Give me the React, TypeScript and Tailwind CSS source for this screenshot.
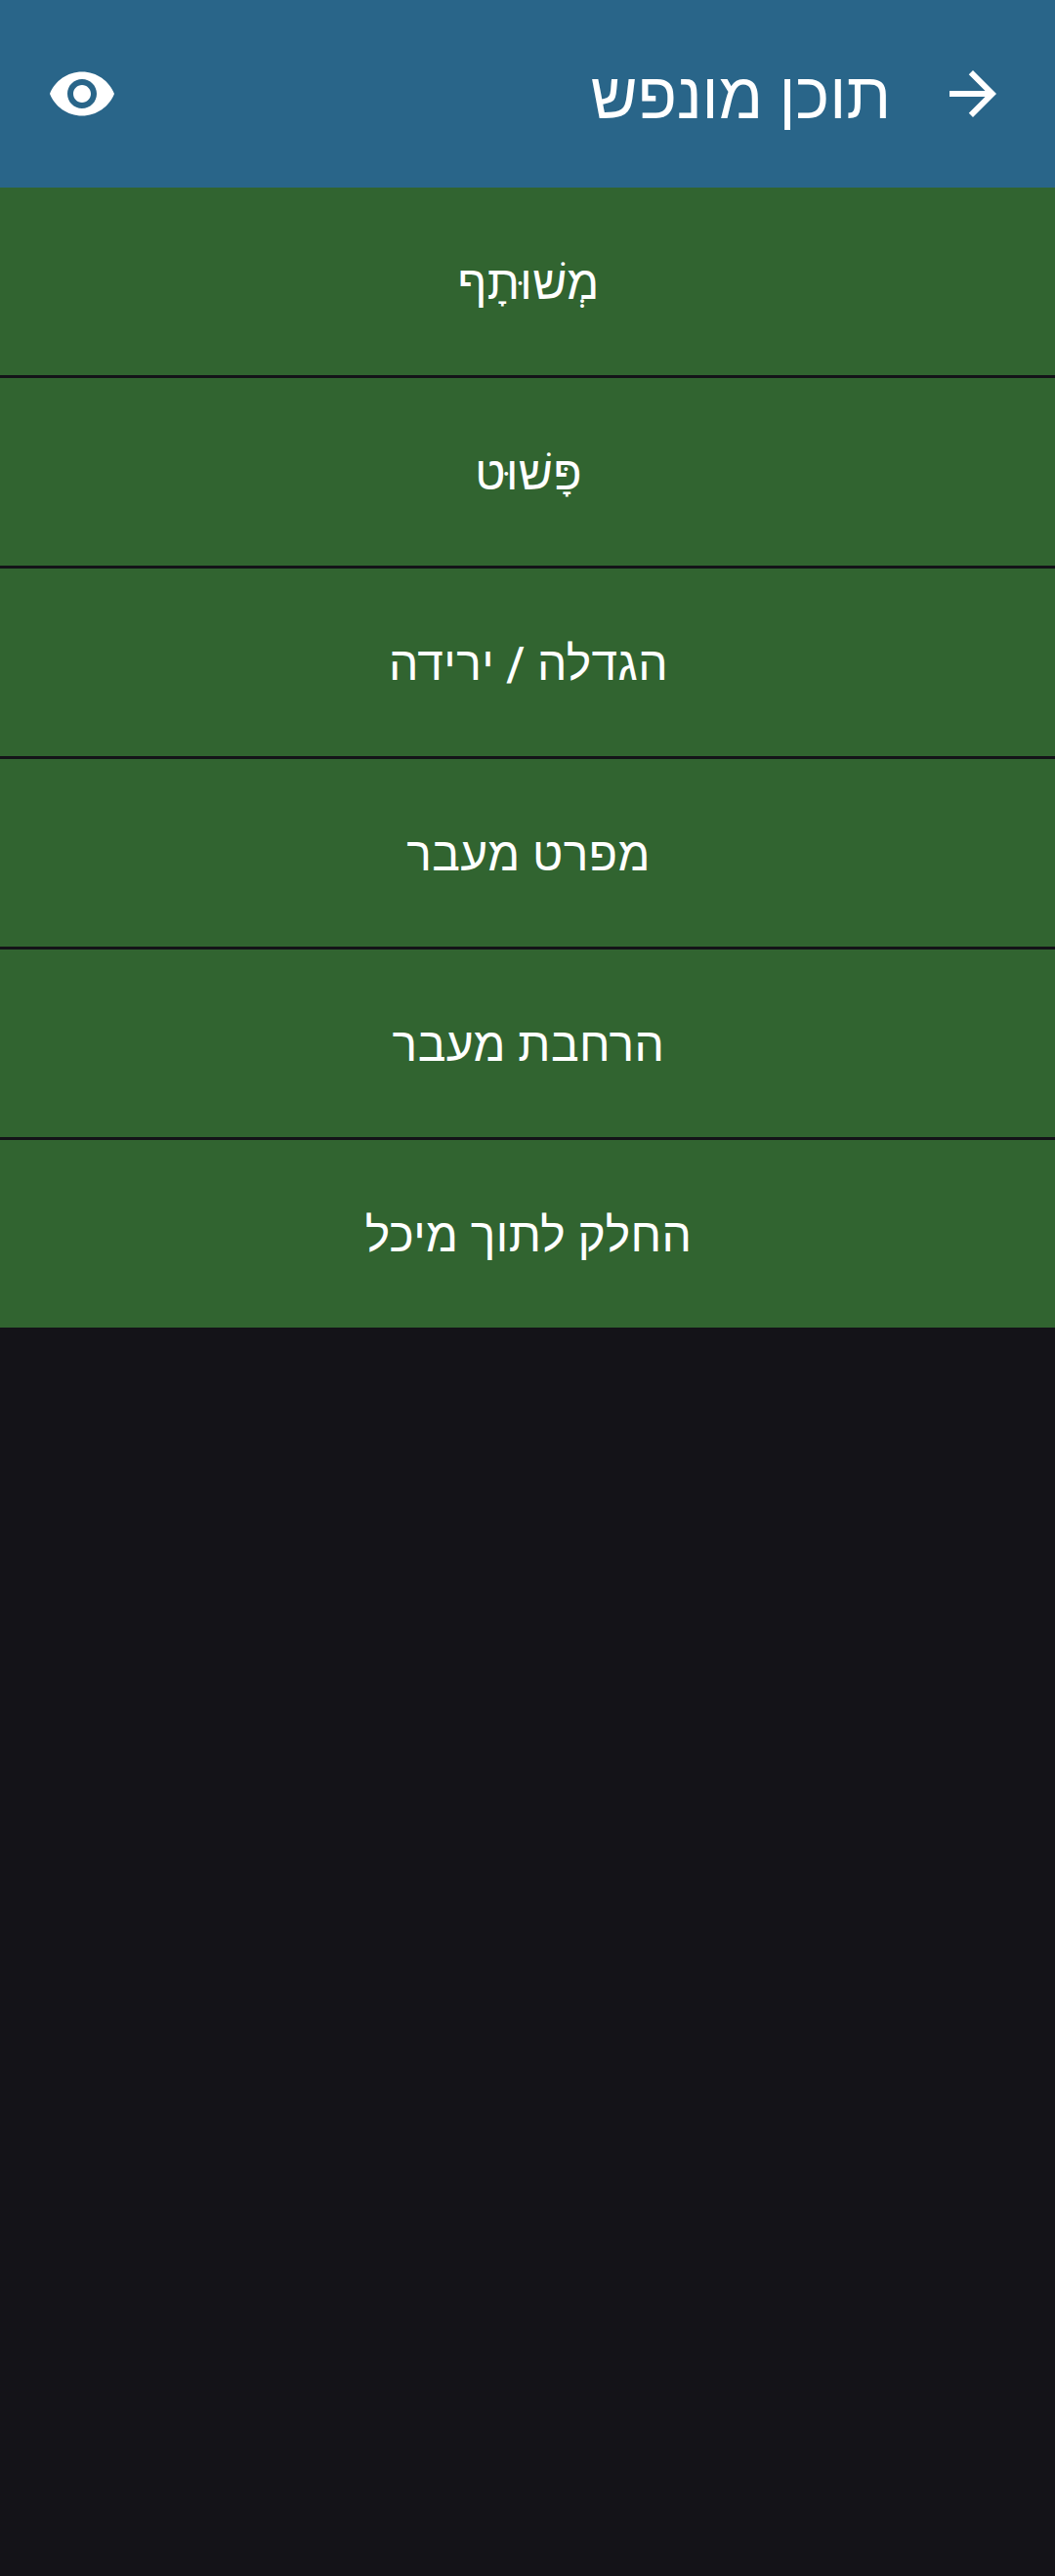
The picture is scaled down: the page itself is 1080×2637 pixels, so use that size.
const items = ["מְשׁוּתָף", "פָּשׁוּט", "הגדלה / ירידה", "מפרט מעבר", "הרחבת מעבר", "החלק לתוך מיכל"];

export default function App() {
  return (
    <div dir="rtl" className="flex h-[2637px] w-[1080px] flex-col bg-[#141318] font-['Roboto','Liberation_Sans',sans-serif] text-white">
      <header className="flex h-48 shrink-0 items-center bg-[#296589] px-12">
        <svg viewBox="0 0 24 24" className="size-[72px]" fill="currentColor">
          <path d="M12 4l-1.41 1.41L16.17 11H4v2h12.17l-5.58 5.59L12 20l8-8z" />
        </svg>
        <h1 className="mr-12 pt-1.5 text-[66px] leading-none">תוכן מונפש</h1>
        <svg viewBox="0 0 24 24" className="mr-auto size-[72px]" fill="currentColor">
          <path d="M12 4.5C7 4.5 2.73 7.61 1 12c1.73 4.39 6 7.5 11 7.5s9.27-3.11 11-7.5c-1.73-4.39-6-7.5-11-7.5zM12 17c-2.76 0-5-2.24-5-5s2.24-5 5-5 5 2.24 5 5-2.24 5-5 5zm0-8c-1.66 0-3 1.34-3 3s1.34 3 3 3 3-1.34 3-3-1.34-3-3-3z" />
        </svg>
      </header>
      <main className="flex flex-col gap-[3px]">
        {items.map((item) => (
          <button key={item} className="flex h-48 items-center justify-center bg-[#316430] pt-1 pl-0.5 text-[48px] leading-none font-medium tracking-[0.4px]">
            {item}
          </button>
        ))}
      </main>
    </div>
  );
}
